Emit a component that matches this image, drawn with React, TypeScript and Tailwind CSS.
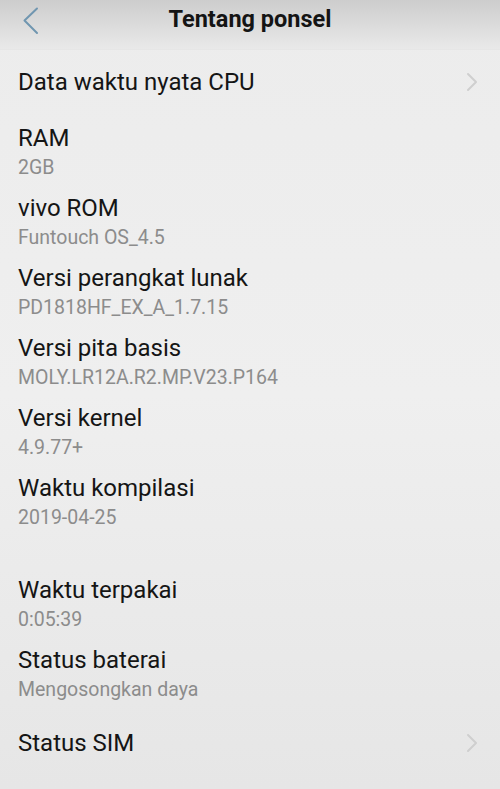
import React from 'react';

const items = [
  { title: 'RAM', value: '2GB' },
  { title: 'vivo ROM', value: 'Funtouch OS_4.5' },
  { title: 'Versi perangkat lunak', value: 'PD1818HF_EX_A_1.7.15' },
  { title: 'Versi pita basis', value: 'MOLY.LR12A.R2.MP.V23.P164' },
  { title: 'Versi kernel', value: '4.9.77+' },
  { title: 'Waktu kompilasi', value: '2019-04-25' },
];

const status = [
  { title: 'Waktu terpakai', value: '0:05:39' },
  { title: 'Status baterai', value: 'Mengosongkan daya' },
];

function Chevron() {
  return (
    <svg width="12" height="20" viewBox="0 0 12 20" fill="none">
      <path d="M2 2l8 8-8 8" stroke="#cfcfcf" strokeWidth="2" strokeLinecap="round" strokeLinejoin="round" />
    </svg>
  );
}

function InfoItem({ title, value }: { title: string; value: string }) {
  return (
    <div className="h-[70px] px-[18px]">
      <div className="text-[24px] leading-[30px] text-[#151515]">{title}</div>
      <div className="text-[19.5px] leading-[30px] text-[#8c8c8c]">{value}</div>
    </div>
  );
}

export default function App() {
  return (
    <div
      className="w-[500px] h-[789px] overflow-hidden bg-gradient-to-b from-[#ececec] via-[#efefef] to-[#e6e6e6]"
      style={{ fontFamily: 'Roboto, "Noto Sans", sans-serif' }}
    >
      <div className="relative h-[50px] flex items-center justify-center border-b border-[#e6e6e6] bg-gradient-to-b from-[#cdcdcd] to-[#e9e9e9]">
        <svg className="absolute left-[22px] top-[7px]" width="18" height="28" viewBox="0 0 18 28" fill="none">
          <path d="M15 1.5L2.5 13.5 15 26" stroke="#7096b0" strokeWidth="2" strokeLinecap="round" strokeLinejoin="round" />
        </svg>
        <h1 className="text-[23.5px] font-bold text-[#141414] -mt-[10px]">Tentang ponsel</h1>
      </div>

      <div className="h-[64px] flex items-center justify-between pl-[18px] pr-[22px]">
        <span className="text-[24px] text-[#151515]">Data waktu nyata CPU</span>
        <Chevron />
      </div>

      <div className="pt-[9px]">
        {items.map(i => (
          <InfoItem key={i.title} title={i.title} value={i.value} />
        ))}
      </div>

      <div className="h-[32px]" />

      <div>
        {status.map(i => (
          <InfoItem key={i.title} title={i.title} value={i.value} />
        ))}
      </div>

      <div className="h-[56px] flex items-center justify-between pl-[18px] pr-[22px]">
        <span className="text-[24px] text-[#151515]">Status SIM</span>
        <Chevron />
      </div>
    </div>
  );
}
